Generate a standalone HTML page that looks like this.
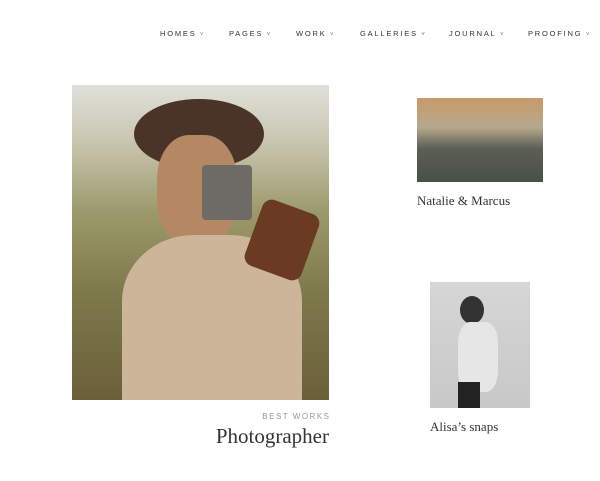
<!DOCTYPE html>
<html><head><style>
body{margin:0;width:600px;height:481px;background:#fff;position:relative;overflow:hidden;font-family:"Liberation Sans",sans-serif}
.n{position:absolute;top:29px;font-size:7.5px;letter-spacing:1.8px;color:#333}
.n:after{content:" ˅";font-size:6px;color:#777}
.ab{position:absolute}
.cap{position:absolute;font-family:"Liberation Serif",serif;color:#333}
</style></head><body>
<div class="n" style="left:160px">HOMES</div>
<div class="n" style="left:229px">PAGES</div>
<div class="n" style="left:296px">WORK</div>
<div class="n" style="left:360px">GALLERIES</div>
<div class="n" style="left:449px">JOURNAL</div>
<div class="n" style="left:528px">PROOFING</div>

<div class="ab" style="left:72px;top:85px;width:257px;height:315px;background:linear-gradient(180deg,#dfe0da 0%,#c9c6b0 18%,#9c9a6c 40%,#7f7a4c 65%,#6b5f3a 100%);overflow:hidden">
 <div class="ab" style="left:62px;top:14px;width:130px;height:70px;border-radius:50%;background:#4a3428"></div>
 <div class="ab" style="left:85px;top:50px;width:80px;height:110px;border-radius:40%;background:#b38863"></div>
 <div class="ab" style="left:50px;top:150px;width:180px;height:165px;border-radius:40% 40% 0 0;background:#cdb59a"></div>
 <div class="ab" style="left:130px;top:80px;width:50px;height:55px;background:#6e6a66;border-radius:4px"></div>
 <div class="ab" style="left:180px;top:120px;width:60px;height:70px;background:#6a3a22;border-radius:10px;transform:rotate(20deg)"></div>
</div>
<div class="ab" style="right:271px;top:412px;font-size:8px;letter-spacing:1.5px;color:#999;margin-right:-1.5px">BEST WORKS</div>
<div class="cap" style="right:271px;top:424px;font-size:21px">Photographer</div>

<div class="ab" style="left:417px;top:98px;width:126px;height:84px;background:linear-gradient(180deg,#c89a6a 0%,#b6a88c 35%,#5b5f55 60%,#485048 100%)"></div>
<div class="cap" style="left:417px;top:193px;font-size:13px">Natalie &amp; Marcus</div>

<div class="ab" style="left:430px;top:282px;width:100px;height:126px;background:linear-gradient(180deg,#d6d6d6,#c8c8c8);overflow:hidden">
 <div class="ab" style="left:30px;top:14px;width:24px;height:28px;border-radius:50%;background:#333"></div>
 <div class="ab" style="left:28px;top:40px;width:40px;height:70px;border-radius:30%;background:#e6e6e6"></div>
 <div class="ab" style="left:28px;top:100px;width:22px;height:26px;background:#222"></div>
</div>
<div class="cap" style="left:430px;top:419px;font-size:13px">Alisa’s snaps</div>
</body></html>
